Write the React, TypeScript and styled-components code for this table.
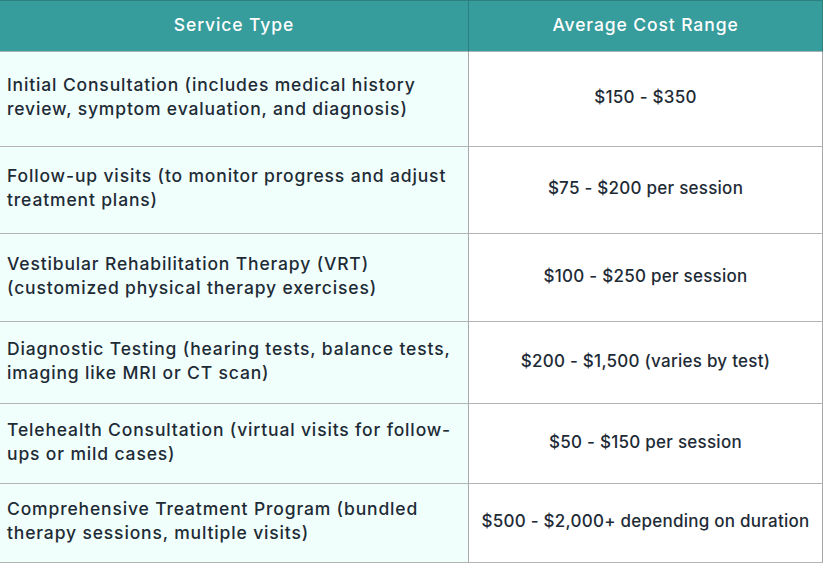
import React from "react";
import styled, { createGlobalStyle } from "styled-components";

const Global = createGlobalStyle`
  html, body { margin: 0; padding: 0; background: #ffffff; }
  body { font-family: "Inter", "Noto Sans", sans-serif; }
`;

const Table = styled.div`
  width: 823px;
  display: grid;
  grid-template-columns: 469px 354px;
  box-sizing: border-box;
`;

const HeadCell = styled.div`
  height: 52px;
  box-sizing: border-box;
  background: #379c9c;
  border-top: 1px solid #2e7f80;
  border-right: 1px solid #2e7f80;
  border-bottom: 1px solid #a9b5b5;
  color: #ffffff;
  font-size: 17.5px;
  font-weight: 500;
  letter-spacing: 0.9px;
  display: flex;
  align-items: center;
  justify-content: center;
  padding-bottom: 4px;
`;

const Cell = styled.div<{ $h: number; $service?: boolean }>`
  height: ${(p) => p.$h}px;
  box-sizing: border-box;
  background: ${(p) => (p.$service ? "#f0fffc" : "#ffffff")};
  border-right: 1px solid #a8a8a8;
  border-bottom: 1px solid #b4b4b4;
  color: #1e2b36;
  font-size: ${(p) => (p.$service ? "17.5px" : "17px")};
  letter-spacing: ${(p) => (p.$service ? "0.85px" : "0.25px")};
  font-weight: 500;
  line-height: 24px;
  white-space: nowrap;
  display: flex;
  align-items: center;
  justify-content: ${(p) => (p.$service ? "flex-start" : "center")};
  text-align: ${(p) => (p.$service ? "left" : "center")};
  padding: ${(p) => (p.$service ? "0 4px 4px 7px" : "0 4px 4px")};
`;

const rows: { service: string[]; cost: string; h: number }[] = [
  {
    service: [
      "Initial Consultation (includes medical history",
      "review, symptom evaluation, and diagnosis)",
    ],
    cost: "$150 - $350",
    h: 95,
  },
  {
    service: [
      "Follow-up visits (to monitor progress and adjust",
      "treatment plans)",
    ],
    cost: "$75 - $200 per session",
    h: 87,
  },
  {
    service: [
      "Vestibular Rehabilitation Therapy (VRT)",
      "(customized physical therapy exercises)",
    ],
    cost: "$100 - $250 per session",
    h: 88,
  },
  {
    service: [
      "Diagnostic Testing (hearing tests, balance tests,",
      "imaging like MRI or CT scan)",
    ],
    cost: "$200 - $1,500 (varies by test)",
    h: 82,
  },
  {
    service: [
      "Telehealth Consultation (virtual visits for follow-",
      "ups or mild cases)",
    ],
    cost: "$50 - $150 per session",
    h: 80,
  },
  {
    service: [
      "Comprehensive Treatment Program (bundled",
      "therapy sessions, multiple visits)",
    ],
    cost: "$500 - $2,000+ depending on duration",
    h: 79,
  },
];

export default function App() {
  return (
    <>
      <Global />
      <Table>
        <HeadCell>Service Type</HeadCell>
        <HeadCell>Average Cost Range</HeadCell>
        {rows.map((r) => (
          <React.Fragment key={r.cost}>
            <Cell $h={r.h} $service>
              <span>
                {r.service.map((line, i) => (
                  <React.Fragment key={i}>
                    {i > 0 && <br />}
                    {line}
                  </React.Fragment>
                ))}
              </span>
            </Cell>
            <Cell $h={r.h}>{r.cost}</Cell>
          </React.Fragment>
        ))}
      </Table>
    </>
  );
}
